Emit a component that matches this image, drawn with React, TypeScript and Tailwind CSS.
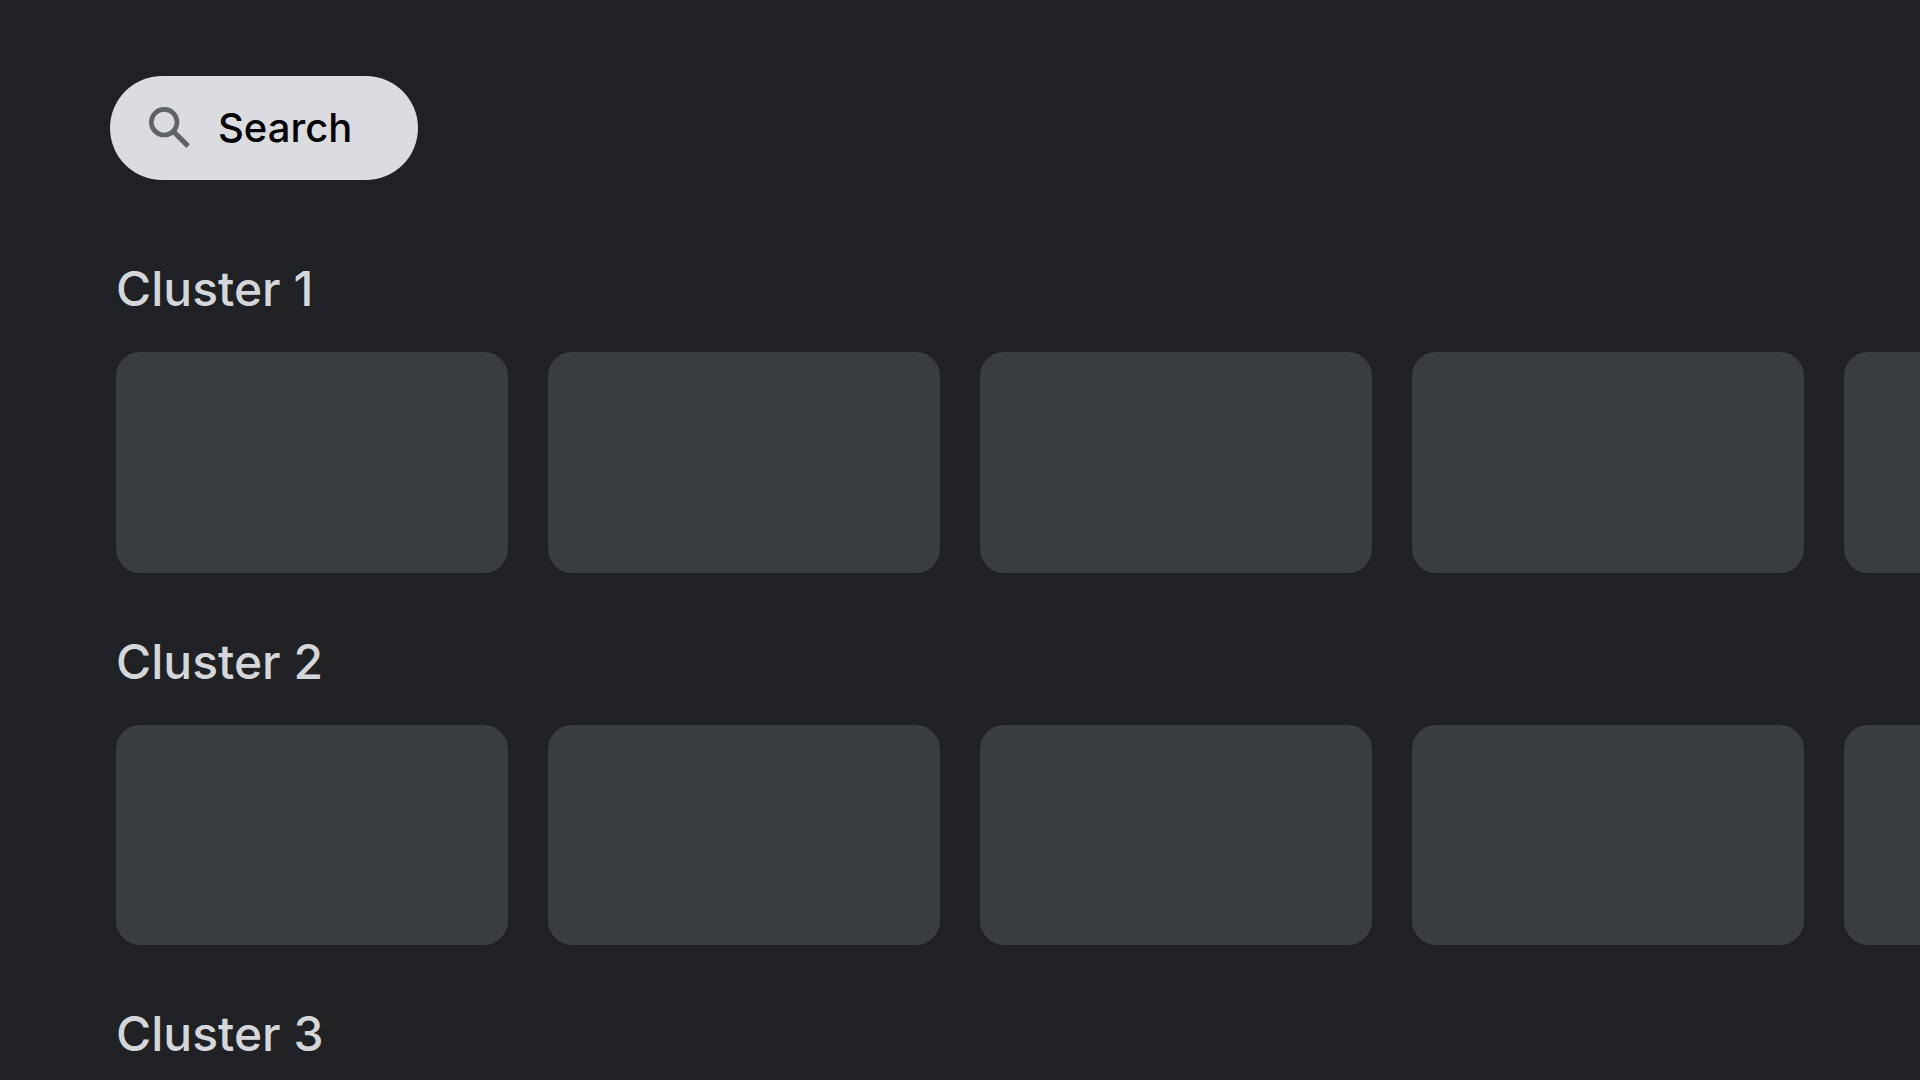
import React from "react";

const clusters = [
  { id: "cluster-1", title: "Cluster 1" },
  { id: "cluster-2", title: "Cluster 2" },
  { id: "cluster-3", title: "Cluster 3" },
];

const cards = [1, 2, 3, 4, 5];

function SearchIcon() {
  return (
    <svg
      viewBox="0 0 24 24"
      className="size-14 shrink-0 fill-none stroke-[#5f6368] stroke-2"
      aria-hidden
    >
      <circle cx="9.5" cy="9.5" r="5.5" />
      <path d="M13.4 13.4 19.75 19.75" strokeWidth="2.2" />
    </svg>
  );
}

function Cluster({ id, title }: { id: string; title: string }) {
  return (
    <section aria-labelledby={id}>
      <h2 id={id} className="text-[48px] leading-16 text-[#d5d6da]">
        {title}
      </h2>
      {/* The row runs past the right edge of the screen */}
      <div className="mt-[31px] flex gap-10 overflow-hidden">
        {cards.map((card) => (
          <div
            key={card}
            className="aspect-video w-[392px] shrink-0 rounded-3xl bg-[#3a3d40]"
          />
        ))}
      </div>
    </section>
  );
}

export default function App() {
  return (
    <div className="h-screen overflow-hidden bg-[#202124] font-['Inter',sans-serif] font-medium [font-optical-sizing:none]">
      <header className="px-[110px] pt-[76px]">
        <button
          type="button"
          className="flex h-[104px] w-[308px] items-center gap-5 rounded-full bg-[#dadce0] pl-8 text-[40px] leading-14 text-black"
        >
          <SearchIcon />
          Search
        </button>
      </header>

      <main className="flex flex-col gap-[57px] pt-[77px] pl-[116px]">
        {clusters.map((cluster) => (
          <Cluster key={cluster.id} id={cluster.id} title={cluster.title} />
        ))}
      </main>
    </div>
  );
}
